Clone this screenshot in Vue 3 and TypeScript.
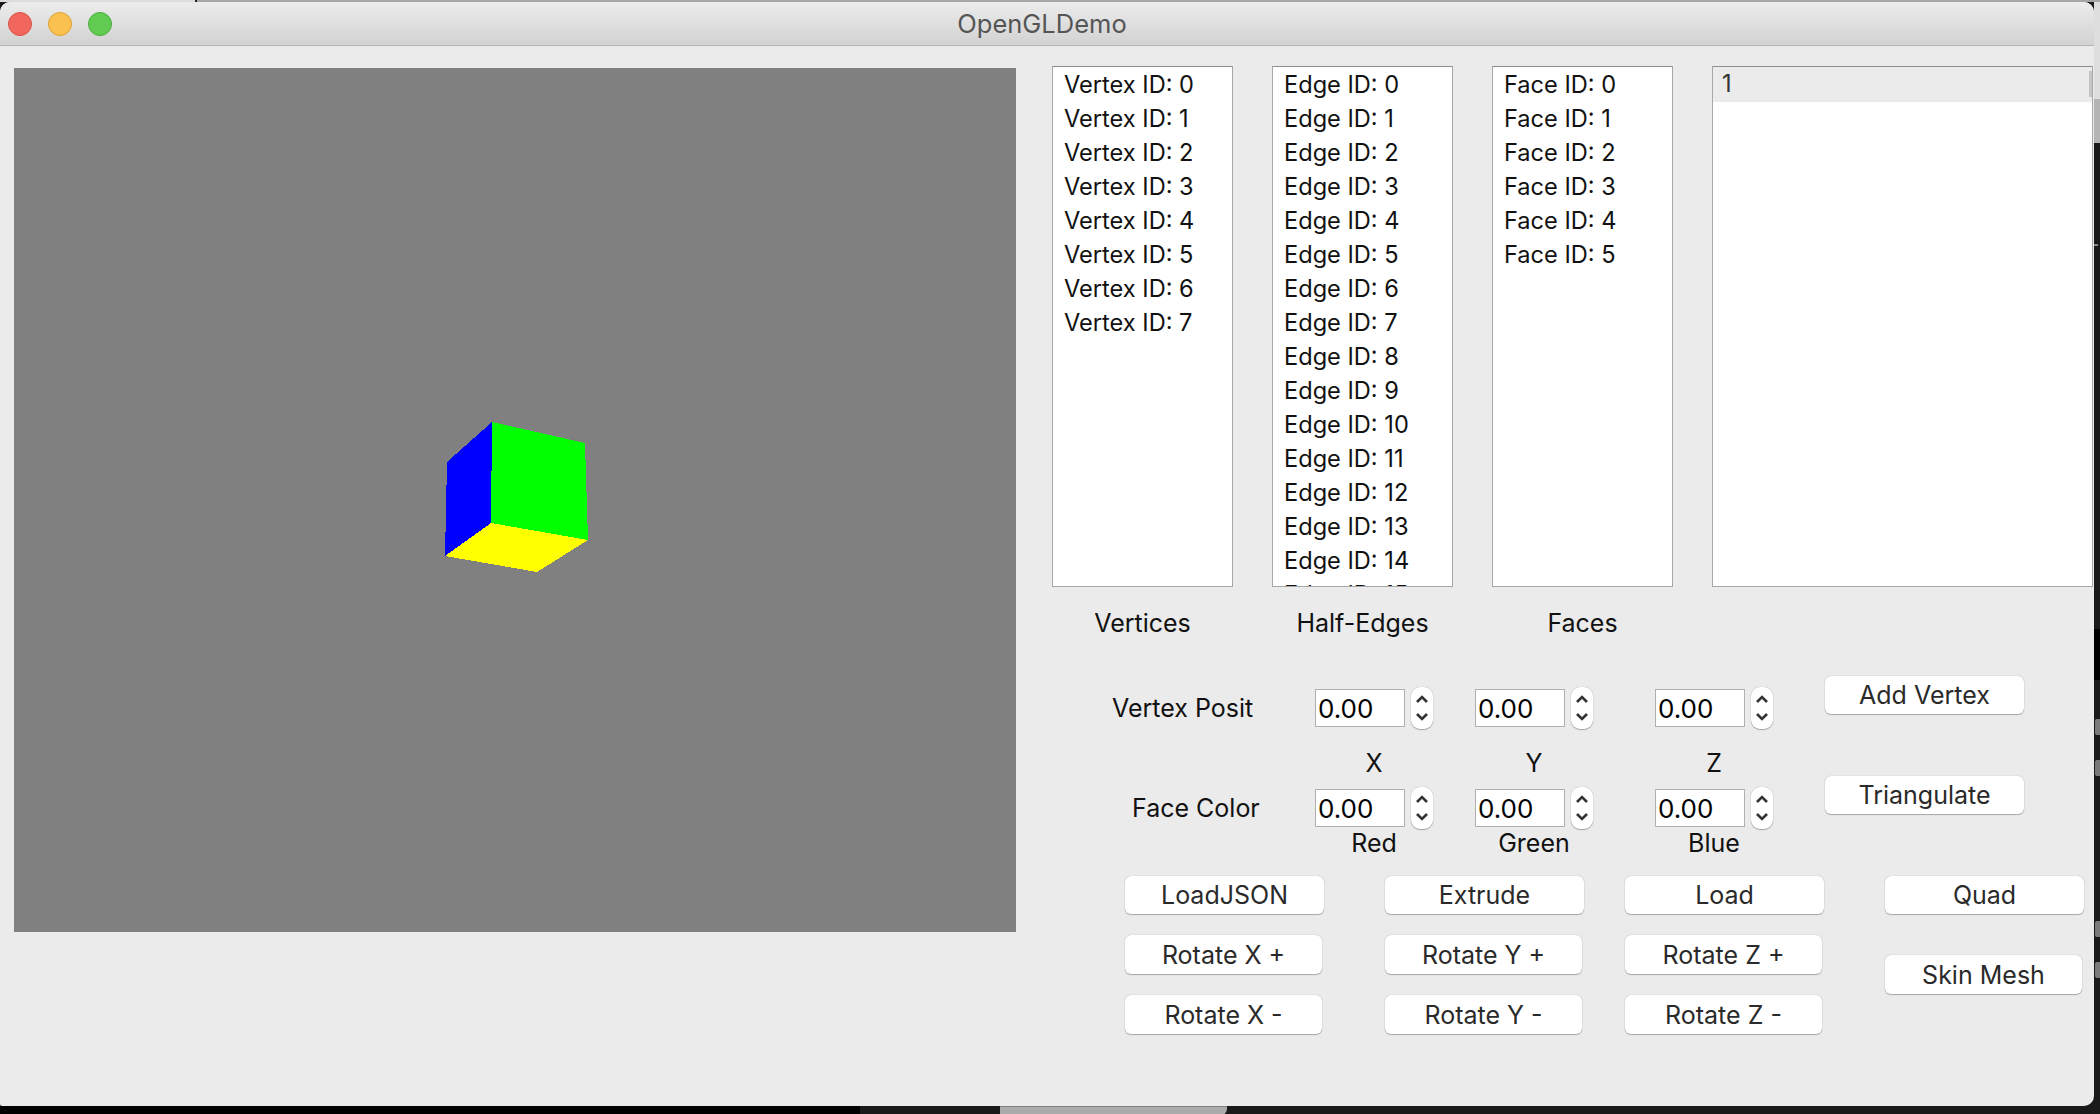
<script setup lang="ts">
const lists = [
  { caption: 'Vertices', prefix: 'Vertex ID', count: 8 },
  { caption: 'Half-Edges', prefix: 'Edge ID', count: 16 },
  { caption: 'Faces', prefix: 'Face ID', count: 6 },
]

const label = (prefix: string, i: number) => `${prefix}: ${i}`
</script>

<template>
  <div class="desktop">
    <!-- bits of other windows peeking out behind this one -->
    <div class="behind" aria-hidden="true">
      <span class="behind__tick"></span>
      <span class="behind__panel behind__panel--light"></span>
      <span class="behind__panel behind__panel--gray"></span>
      <span class="behind__panel behind__panel--black"></span>
      <span class="behind__mark behind__mark--1"></span>
      <span class="behind__mark behind__mark--2"></span>
      <span class="behind__mark behind__mark--3"></span>
      <span class="behind__mark behind__mark--4"></span>
      <span class="behind__floor behind__floor--black"></span>
      <span class="behind__floor behind__floor--gray"></span>
    </div>

    <div class="window">
      <header class="titlebar">
        <div class="lights">
          <span class="light light--close"></span>
          <span class="light light--min"></span>
          <span class="light light--max"></span>
        </div>
        <span class="title">OpenGLDemo</span>
      </header>

      <div class="body">
        <div class="viewport">
          <svg class="cube" width="1002" height="864" viewBox="0 0 1002 864" shape-rendering="crispEdges">
            <polygon points="478,354 433,394 431,488 477,455" fill="#0000ff" />
            <polygon points="478,354 571,375 574,472 477,455" fill="#00ff00" />
            <polygon points="477,455 574,472 523,504 431,488" fill="#ffff00" />
          </svg>
        </div>

        <div class="panel">
          <div class="lists">
            <ul v-for="list in lists" :key="list.prefix" class="list">
              <li v-for="n in list.count" :key="n" class="row">{{ label(list.prefix, n - 1) }}</li>
            </ul>
            <ul class="list list--wide">
              <li class="row row--current">1</li>
              <span class="scrollbar"></span>
            </ul>
          </div>

          <div class="captions">
            <span v-for="list in lists" :key="list.caption" class="caption">{{ list.caption }}</span>
          </div>

          <div class="form">
            <div class="fields">
              <span class="field-label field-label--posit">Vertex Posit</span>
              <div v-for="i in 3" :key="'p' + i" class="spin">
                <input class="spin__input" value="0.00" />
                <span class="spin__arrows">
                  <svg width="14" height="30" viewBox="0 0 14 30" fill="none" stroke="#333" stroke-width="2.6">
                    <path d="M2 9 7 4l5 5M2 21l5 5 5-5" />
                  </svg>
                </span>
              </div>

              <span></span>
              <span class="axis">X</span>
              <span class="axis">Y</span>
              <span class="axis">Z</span>

              <span class="field-label field-label--color">Face Color</span>
              <div v-for="i in 3" :key="'c' + i" class="spin">
                <input class="spin__input" value="0.00" />
                <span class="spin__arrows">
                  <svg width="14" height="30" viewBox="0 0 14 30" fill="none" stroke="#333" stroke-width="2.6">
                    <path d="M2 9 7 4l5 5M2 21l5 5 5-5" />
                  </svg>
                </span>
              </div>

              <span></span>
              <span class="axis axis--tight">Red</span>
              <span class="axis axis--tight">Green</span>
              <span class="axis axis--tight">Blue</span>
            </div>
            <div class="side">
              <button class="btn">Add Vertex</button>
              <button class="btn">Triangulate</button>
            </div>
          </div>

          <div class="actions">
            <div class="col col--a">
              <button class="btn">LoadJSON</button>
              <button class="btn btn--narrow">Rotate X +</button>
              <button class="btn btn--narrow">Rotate X -</button>
            </div>
            <div class="col col--b">
              <button class="btn">Extrude</button>
              <button class="btn btn--narrow">Rotate Y +</button>
              <button class="btn btn--narrow">Rotate Y -</button>
            </div>
            <div class="col col--c">
              <button class="btn">Load</button>
              <button class="btn btn--narrow">Rotate Z +</button>
              <button class="btn btn--narrow">Rotate Z -</button>
            </div>
            <div class="col col--d">
              <button class="btn">Quad</button>
              <button class="btn btn--narrow">Skin Mesh</button>
            </div>
          </div>
        </div>
      </div>
    </div>
  </div>
</template>

<style>
html,
body {
  margin: 0;
  background: #1a1a1a;
  overflow: hidden;
}
</style>

<style scoped>
.desktop {
  position: relative;
  box-sizing: border-box;
  width: 2100px;
  height: 1114px;
  padding-top: 2px;
  background: linear-gradient(90deg, #dcdcdc 195px, #222 195px, #222 197px, #a6a6a6 197px);
  background-size: 100% 2px;
  background-repeat: no-repeat;
  background-color: #1a1a1a;
  overflow: hidden;
  font-family: Inter, "Liberation Sans", sans-serif;
  font-size: 25px;
  color: #111;
}

.behind > * {
  position: absolute;
  display: block;
}

.behind__panel {
  left: 2094px;
  width: 6px;
}

.behind__panel--light { top: 2px; height: 97px; background: #dedede; }
.behind__panel--gray { top: 99px; height: 44px; background: #b4b4b4; }
.behind__panel--black { top: 629px; height: 51px; background: #000; }

.behind__tick {
  left: 2094px;
  top: 244px;
  width: 4px;
  height: 2px;
  background: #8a8a8a;
}

.behind__mark {
  left: 2095px;
  width: 5px;
  height: 16px;
  background: #7a7a7a;
  border-radius: 2px 0 0 2px;
}

.behind__mark--1 { top: 719px; }
.behind__mark--2 { top: 760px; }
.behind__mark--3 { top: 921px; }
.behind__mark--4 { top: 962px; }

.behind__floor {
  top: 1106px;
  height: 8px;
}

.behind__floor--black { left: 0; width: 860px; background: #000; }
.behind__floor--gray {
  left: 1000px;
  width: 227px;
  background: #aaa;
  border-top: 1px solid #808080;
  border-radius: 0 0 6px 0;
}

.window {
  position: relative;
  width: 2094px;
  height: 1104px;
  background: #ebebeb;
  border-radius: 10px 10px 10px 2px;
  overflow: hidden;
}

.titlebar {
  position: relative;
  box-sizing: border-box;
  height: 44px;
  display: flex;
  align-items: center;
  justify-content: center;
  background: linear-gradient(#ececec, #d2d2d2);
  border-bottom: 1px solid #b4b4b4;
}

.lights {
  position: absolute;
  left: 8px;
  top: 10px;
  display: flex;
  gap: 16px;
}

.light {
  width: 22px;
  height: 22px;
  border-radius: 50%;
  border: 1px solid;
}

.light--close { background: #f1675e; border-color: #dc4f46; }
.light--min { background: #f9c250; border-color: #df9f2d; }
.light--max { background: #61cb52; border-color: #48ab3a; }

.title {
  margin-right: 10px;
  color: #555;
  font-size: 25.5px;
}

.body {
  display: flex;
}

.viewport {
  flex: none;
  width: 1002px;
  height: 864px;
  margin: 22px 0 0 14px;
  background: #808080;
}

.cube {
  display: block;
}

.panel {
  flex: none;
  width: 1042px;
  margin-left: 36px;
  padding-top: 20px;
}

.lists {
  display: flex;
  gap: 39px;
}

.list {
  position: relative;
  box-sizing: border-box;
  width: 181px;
  height: 521px;
  margin: 0;
  padding: 0;
  list-style: none;
  background: #fff;
  border: 1px solid #a8a8a8;
  border-top-color: #8e8e8e;
  overflow: hidden;
  font-size: 23.6px;
}

.list--wide {
  width: 381px;
}

.row {
  height: 34px;
  line-height: 36px;
  padding-left: 11px;
}

.row--current {
  height: 35px;
  line-height: 33px;
  padding-left: 9px;
  background: #ebebeb;
  color: #333;
}

.scrollbar {
  position: absolute;
  right: 0;
  top: 4px;
  width: 3px;
  height: 26px;
  background: #c4c4c4;
}

.captions {
  display: flex;
  gap: 39px;
  margin-top: 16px;
  height: 40px;
  line-height: 40px;
  text-align: center;
}

.caption {
  width: 181px;
}

.form {
  display: flex;
  margin-top: 44px;
}

.fields {
  display: grid;
  grid-template-columns: 263px 160px 180px 118px;
  grid-template-rows: 42px 58px 42px 30px;
  align-items: center;
  width: 773px;
}

.field-label--posit { padding-left: 60px; }
.field-label--color { padding-left: 80px; }

.axis {
  width: 118px;
  padding-top: 10px;
  text-align: center;
}

.axis--tight {
  padding-top: 0;
  margin-top: -2px;
}

.spin {
  display: flex;
  align-items: center;
  gap: 6px;
}

.spin__input {
  box-sizing: border-box;
  width: 90px;
  height: 38px;
  padding: 0 2px;
  border: 1px solid #b0b0b0;
  background: #fff;
  font: inherit;
  font-size: 26px;
  color: #000;
  outline: none;
}

.spin__arrows {
  box-sizing: border-box;
  display: flex;
  align-items: center;
  justify-content: center;
  width: 22px;
  height: 42px;
  background: #fff;
  border-radius: 9px;
  box-shadow: 0 0 1px #999, 0 1px 1px #aaa;
}

.side {
  display: flex;
  flex-direction: column;
  gap: 62px;
  margin-top: -11px;
}

.btn {
  box-sizing: border-box;
  width: 199px;
  height: 38px;
  padding: 0;
  border: none;
  border-radius: 6px;
  background: #fff;
  box-shadow: 0 0 1px #999, 0 1px 1px #aaa;
  font: inherit;
  color: #2a2a2a;
}

.btn--narrow {
  width: 197px;
  height: 39px;
}

.actions {
  display: flex;
  margin: 17px 0 0 73px;
}

.col {
  display: flex;
  flex-direction: column;
  gap: 21px;
}

.col--a { width: 260px; }
.col--b { width: 240px; }
.col--c { width: 260px; }
.col--d { gap: 41px; }
</style>
